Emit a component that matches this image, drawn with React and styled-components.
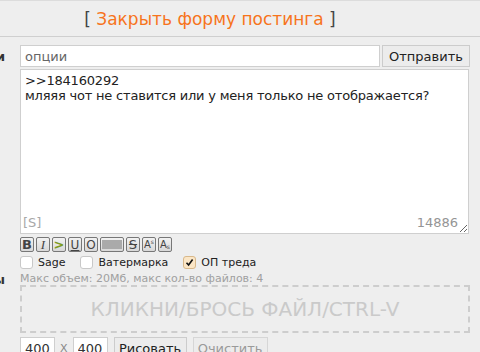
import React from "react";
import styled, { createGlobalStyle } from "styled-components";

const Global = createGlobalStyle`
  html, body { margin: 0; padding: 0; background: #eeeeee; }
  body { font-family: "DejaVu Sans", Verdana, sans-serif; color: #333; }
  * { box-sizing: border-box; }
`;

const Page = styled.div`
  width: 480px;
  height: 352px;
  overflow: hidden;
  border-top: 1px solid #dcdcdc;
`;

const Header = styled.div`
  height: 36px;
  border-bottom: 1px solid #cfcfcf;
  display: flex;
  align-items: center;
  justify-content: center;
  padding-right: 60px;
  font-size: 17px;
  color: #444;
  white-space: pre;
`;

const CloseLink = styled.span`
  color: #f7741c;
`;

const Form = styled.div`
  display: flex;
  flex-direction: column;
  padding-top: 8px;
`;

const Row = styled.div`
  display: flex;
  align-items: ${(p) => p.$align || "center"};
  margin-top: ${(p) => p.$mt || 0}px;
`;

const Label = styled.div`
  width: 20px;
  flex-shrink: 0;
  display: flex;
  justify-content: flex-end;
  overflow: hidden;
  padding-right: 15px;
  font-weight: bold;
  font-size: 13px;
  color: #333;
  white-space: nowrap;
`;

const Field = styled.div`
  display: flex;
  flex-direction: ${(p) => (p.$column ? "column" : "row")};
  align-items: ${(p) => (p.$column ? "stretch" : "center")};
  width: ${(p) => p.$w || 450}px;
`;

const TextInput = styled.input`
  width: ${(p) => p.$w}px;
  height: 22px;
  border: 1px solid #cfcfcf;
  background: #fff;
  padding: 0 4px;
  font: 13px "DejaVu Sans", Verdana, sans-serif;
  color: #333;
  outline: none;
  &::placeholder { color: #666; }
`;

const Button = styled.button`
  height: 22px;
  width: ${(p) => p.$w}px;
  margin-left: ${(p) => p.$ml || 0}px;
  border: 1px solid ${(p) => (p.$disabled ? "#d6d6d6" : "#cccccc")};
  background: #ececec;
  font: 13px "DejaVu Sans", Verdana, sans-serif;
  color: ${(p) => (p.$disabled ? "#9a9a9a" : "#222")};
  padding: 0;
`;

const AreaWrap = styled.div`
  position: relative;
  width: 449px;
  height: 165px;
`;

const Area = styled.textarea`
  display: block;
  width: 449px;
  height: 165px;
  border: 1px solid #cfcfcf;
  background: #fff;
  padding: 3px 4px;
  font: 13px/15px "DejaVu Sans", Verdana, sans-serif;
  letter-spacing: -0.2px;
  color: #222;
  resize: both;
  outline: none;
`;

const Corner = styled.span`
  position: absolute;
  bottom: 5px;
  ${(p) => (p.$right ? "right: 11px;" : "left: 3px;")}
  font: 13px/13px "DejaVu Sans", Verdana, sans-serif;
  color: ${(p) => (p.$right ? "#959595" : "#a8a8a8")};
  pointer-events: none;
`;

const Toolbar = styled.div`
  display: flex;
  gap: 2px;
  margin-top: 3px;
  padding-left: 20px;
`;

const Tool = styled.div`
  width: ${(p) => p.$w || 14}px;
  height: 15px;
  border: 1px solid #777;
  border-radius: 2px;
  background: linear-gradient(#f2f2f2, #d8d8d8);
  display: flex;
  align-items: center;
  justify-content: center;
  font-size: 12px;
  line-height: 1;
  color: #444;
  overflow: hidden;
`;

const Glyph = styled.span`
  font-family: ${(p) => (p.$serif ? '"Liberation Serif", serif' : '"DejaVu Sans", sans-serif')};
  font-weight: ${(p) => (p.$bold ? "bold" : "normal")};
  font-style: ${(p) => (p.$italic ? "italic" : "normal")};
  text-decoration: ${(p) => p.$deco || "none"};
  color: ${(p) => p.$color || "#444"};
  font-size: ${(p) => p.$size || 12}px;
`;

const Small = styled.span`
  font-size: 6px;
  align-self: ${(p) => (p.$up ? "flex-start" : "flex-end")};
  margin: ${(p) => (p.$up ? "1px 0 0 0" : "0 0 1px 0")};
`;

const SpoilerBlock = styled.span`
  width: 20px;
  height: 9px;
  background: #aaa;
`;

const Checks = styled.div`
  display: flex;
  align-items: center;
  margin-top: 4px;
  padding-left: 20px;
  font-size: 11px;
  color: #222;
`;

const CheckItem = styled.label`
  display: flex;
  align-items: center;
  gap: 5px;
  margin-right: 15px;
`;

const Box = styled.span`
  width: 13px;
  height: 13px;
  border-radius: 3px;
  border: 1px solid ${(p) => (p.$on ? "#d8b88a" : "#c8c8c8")};
  background: ${(p) => (p.$on ? "#fbe6c6" : "#fff")};
  display: flex;
  align-items: center;
  justify-content: center;
`;

const Info = styled.div`
  font-size: 11px;
  line-height: 13px;
  color: #a0a0a0;
`;

const Drop = styled.div`
  width: 450px;
  height: 48px;
  border: 2px dashed #cdcdcd;
  display: flex;
  align-items: center;
  justify-content: center;
  font-size: 20px;
  color: #cacaca;
`;

const Times = styled.span`
  margin: 0 5px;
  font-size: 11px;
  color: #888;
`;

const checks = [
  { label: "Sage", on: false },
  { label: "Ватермарка", on: false },
  { label: "ОП треда", on: true },
];

export default function App() {
  return (
    <Page>
      <Global />
      <Header>
        [ <CloseLink>Закрыть форму постинга</CloseLink> ]
      </Header>
      <Form>
        <Row>
          <Label>Опции</Label>
          <Field>
            <TextInput $w={360} placeholder="опции" />
            <Button $w={88} $ml={2}>Отправить</Button>
          </Field>
        </Row>
        <Row $mt={2}>
          <Label />
          <AreaWrap>
            <Area
              defaultValue={">>184160292\nмляяя чот не ставится или у меня только не отображается?"}
            />
            <Corner>[S]</Corner>
            <Corner $right>14886</Corner>
          </AreaWrap>
        </Row>
        <Toolbar>
          <Tool><Glyph $bold $size={13}>B</Glyph></Tool>
          <Tool><Glyph $serif $italic $size={13}>I</Glyph></Tool>
          <Tool><Glyph $bold $color="#7b9a22" $size={13}>&gt;</Glyph></Tool>
          <Tool><Glyph $deco="underline">U</Glyph></Tool>
          <Tool><Glyph $deco="overline">O</Glyph></Tool>
          <Tool $w={24}><SpoilerBlock /></Tool>
          <Tool><Glyph $deco="line-through" $size={13}>S</Glyph></Tool>
          <Tool><Glyph $size={10}>A</Glyph><Small $up>s</Small></Tool>
          <Tool><Glyph $size={10}>A</Glyph><Small>s</Small></Tool>
        </Toolbar>
        <Checks>
          {checks.map((c) => (
            <CheckItem key={c.label}>
              <Box $on={c.on}>
                {c.on && (
                  <svg width="9" height="9" viewBox="0 0 9 9">
                    <path d="M1.5 4.8 L3.6 7 L7.6 1.5" fill="none" stroke="#111" strokeWidth="1.6" />
                  </svg>
                )}
              </Box>
              {c.label}
            </CheckItem>
          ))}
        </Checks>
        <Row $mt={3} $align="flex-start">
          <Label>Файлы</Label>
          <Field $column>
            <Info>Макс объем: 20Мб, макс кол-во файлов: 4</Info>
            <Drop>КЛИКНИ/БРОСЬ ФАЙЛ/CTRL-V</Drop>
          </Field>
        </Row>
        <Row $mt={4}>
          <Label />
          <Field>
            <TextInput $w={35} defaultValue="400" />
            <Times>X</Times>
            <TextInput $w={35} defaultValue="400" />
            <Button $w={73} $ml={6}>Рисовать</Button>
            <Button $w={75} $ml={6} $disabled>Очистить</Button>
          </Field>
        </Row>
      </Form>
    </Page>
  );
}
